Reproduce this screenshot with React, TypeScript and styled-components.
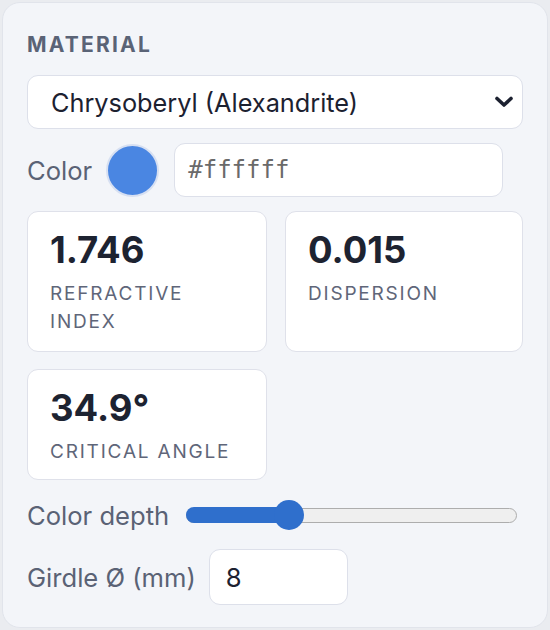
import React from 'react'
import styled, { createGlobalStyle } from 'styled-components'

const GlobalStyle = createGlobalStyle`
  html, body {
    margin: 0;
    padding: 0;
    background: #eaecf0;
  }
  body {
    padding: 2px 0 0 2px;
    font-family: Inter, 'Noto Sans', sans-serif;
  }
`

const Panel = styled.div`
  box-sizing: border-box;
  width: 546px;
  height: 626px;
  padding: 30px 24px 0 24px;
  background: #f3f5f9;
  border: 1px solid #e1e4eb;
  border-radius: 18px;
  display: flex;
  flex-direction: column;
`

const Heading = styled.div`
  font-size: 21px;
  font-weight: 700;
  letter-spacing: 2.2px;
  color: #5a6376;
  line-height: 24px;
  margin-bottom: 18px;
`

const Stack = styled.div`
  display: flex;
  flex-direction: column;
  gap: 14px;
`

const SelectBox = styled.div`
  box-sizing: border-box;
  height: 54px;
  display: flex;
  align-items: center;
  justify-content: space-between;
  padding: 0 8px 0 23px;
  background: #fff;
  border: 1.5px solid #dde0ea;
  border-radius: 11px;
  font-size: 25.3px;
  color: #1c2130;
`

const Row = styled.div<{ $gap?: number }>`
  display: flex;
  align-items: center;
  gap: ${({ $gap }) => $gap ?? 15}px;
`

const Label = styled.span`
  font-size: 25.6px;
  color: #5a6275;
`

const Swatch = styled.div<{ $color: string }>`
  box-sizing: border-box;
  width: 53px;
  height: 53px;
  margin-left: -1px;
  border-radius: 50%;
  background: ${({ $color }) => $color};
  border: 2px solid #d7e0f2;
`

const TextField = styled.div<{ $width: number; $mono?: boolean }>`
  box-sizing: border-box;
  width: ${({ $width }) => $width}px;
  height: ${({ $mono }) => ($mono ? 54 : 56)}px;
  display: flex;
  align-items: center;
  padding: 0 ${({ $mono }) => ($mono ? 13 : 16)}px;
  background: #fff;
  border: 1.5px solid #dde0ea;
  border-radius: 11px;
  font-family: ${({ $mono }) =>
    $mono ? "'DejaVu Sans Mono', 'Liberation Mono', monospace" : 'inherit'};
  font-size: ${({ $mono }) => ($mono ? 24 : 25.6)}px;
  color: ${({ $mono }) => ($mono ? '#6a6a6a' : '#1c2130')};
`

const Grid = styled.div`
  display: grid;
  grid-template-columns: 240px 238px;
  column-gap: 18px;
  row-gap: 17px;
`

const Card = styled.div<{ $height: number }>`
  box-sizing: border-box;
  height: ${({ $height }) => $height}px;
  padding: 18px 22px 0 22px;
  background: #fff;
  border: 1.5px solid #dfe1ea;
  border-radius: 11px;
`

const Value = styled.div`
  font-size: 36.5px;
  font-weight: 700;
  line-height: 40px;
  color: #1d2331;
`

const CardLabel = styled.div`
  margin-top: 10px;
  font-size: 19px;
  line-height: 28px;
  letter-spacing: 1.8px;
  color: #5f6679;
  text-transform: uppercase;
`

const Track = styled.div`
  position: relative;
  box-sizing: border-box;
  width: 331px;
  height: 15px;
  margin-left: 3px;
  background: #efefef;
  border: 1.5px solid #adadad;
  border-radius: 8px;
`

const Fill = styled.div`
  position: absolute;
  left: -1.5px;
  top: -1.5px;
  bottom: -1.5px;
  background: #2f6fcc;
  border-radius: 8px;
`

const Thumb = styled.div`
  position: absolute;
  top: 50%;
  width: 30px;
  height: 30px;
  margin: -15px 0 0 -15px;
  border-radius: 50%;
  background: #2f6fcc;
`

function Slider({ value }: { value: number }): JSX.Element {
  const pct = `${value * 100}%`
  return (
    <Track>
      <Fill style={{ width: `calc(${pct} + 8px)` }} />
      <Thumb style={{ left: pct }} />
    </Track>
  )
}

function Chevron(): JSX.Element {
  return (
    <svg width='20' height='14' viewBox='0 0 20 14'>
      <path
        d='M3 3.5 L10 10 L17 3.5'
        fill='none'
        stroke='#1c2130'
        strokeWidth='3.6'
        strokeLinecap='round'
        strokeLinejoin='round'
      />
    </svg>
  )
}

const stats = [
  { value: '1.746', label: 'Refractive index', height: 141 },
  { value: '0.015', label: 'Dispersion', height: 141 },
  { value: '34.9°', label: 'Critical angle', height: 111 },
]

export default function App(): JSX.Element {
  return (
    <>
      <GlobalStyle />
      <Panel>
        <Heading>MATERIAL</Heading>
        <Stack>
          <SelectBox>
            Chrysoberyl (Alexandrite)
            <Chevron />
          </SelectBox>
          <Row>
            <Label>Color</Label>
            <Swatch $color='#4a86e2' />
            <TextField $width={329} $mono>
              #ffffff
            </TextField>
          </Row>
          <Grid>
            {stats.map((s) => (
              <Card key={s.label} $height={s.height}>
                <Value>{s.value}</Value>
                <CardLabel>{s.label}</CardLabel>
              </Card>
            ))}
          </Grid>
        </Stack>
        <Row $gap={14} style={{ marginTop: 20, height: 30 }}>
          <Label>Color depth</Label>
          <Slider value={0.31} />
        </Row>
        <Row $gap={13} style={{ marginTop: 19 }}>
          <Label>Girdle Ø (mm)</Label>
          <TextField $width={139}>8</TextField>
        </Row>
      </Panel>
    </>
  )
}
